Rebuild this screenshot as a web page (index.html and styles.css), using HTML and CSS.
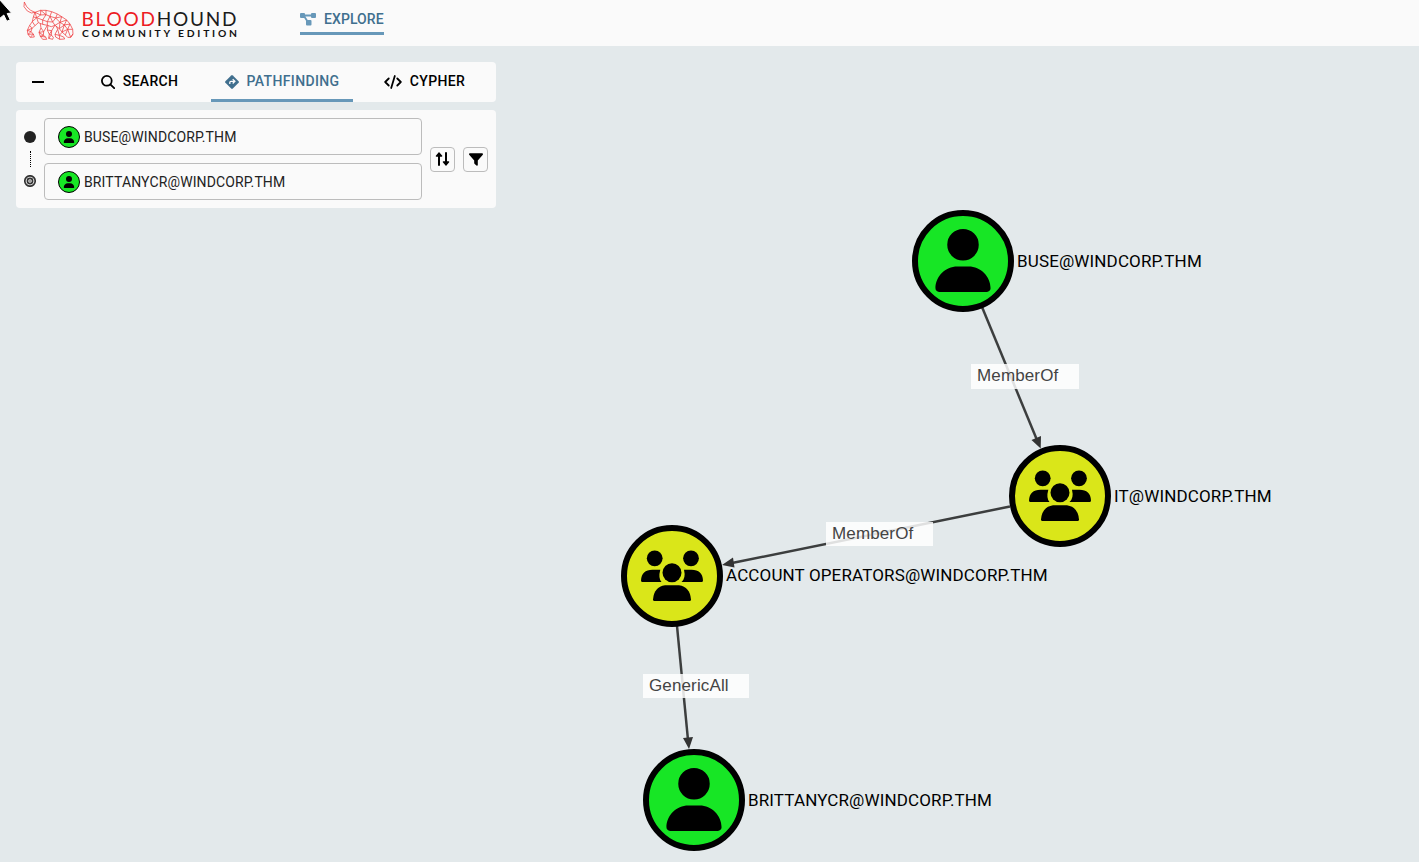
FILE: index.html
```html
<!DOCTYPE html>
<html lang="en">
<head>
<meta charset="utf-8">
<title>BloodHound</title>
<link rel="stylesheet" href="styles.css">
</head>
<body>
<svg class="defs" width="0" height="0">
  <defs>
    <symbol id="user" viewBox="0 0 448 512"><path d="M224 256A128 128 0 1 0 224 0a128 128 0 1 0 0 256zm-45.700 48C79.800 304 0 383.800 0 482.300C0 498.700 13.300 512 29.700 512H418.300c16.400 0 29.700-13.300 29.700-29.700C448 383.800 368.200 304 269.700 304H178.300z"/></symbol>
    <symbol id="group" viewBox="-31 -26 62 52">
      <circle cx="-17.300" cy="-17.700" r="7.900"/><circle cx="19" cy="-17.700" r="7.900"/>
      <path d="M-31 4.500Q-30.500-6.300-19.500-6.300H-11.700Q-14 2 -10.500 6H-29.500Q-31 6-31 4.500ZM31 4.500Q30.500-6.300 19.500-6.300H12Q14 2 9.500 6H29.500Q31 6 31 4.500Z"/>
      <circle cy="-3.300" r="9.500"/>
      <path d="M-7 9.300H7Q18 11 19 23.500Q19 25 17.500 25H-17.500Q-19 25-19 23.500Q-18 11-7 9.300Z"/>
    </symbol>
  </defs>
</svg>
<header class="topbar">
  <svg class="logo" width="220" height="46" viewBox="0 0 220 46">
    <g class="hound" transform="translate(-1 0) scale(.3333)">
      <path d="M13 6L12 20L22 33L34 39L45 37L62 31L78 31L95 35L112 42L125 50L140 60L150 72L158 88L159 102L152 112L143 112L136 105L126 96L118 86L105 76L94 80L82 76L68 73L55 68L45 77L36 85L33 95L40 102L43 111L31 112L24 103L22 91L29 76L37 65L40 51L45 37L32 31L20 20L13 6"/>
      <path d="M61 71L63 84L57 97L61 109L68 118L80 118L77 111L70 106L71 95L82 76M84 76L82 90L88 103L86 115L98 118L100 112L94 105L95 92L104 77M109 79L113 88L105 103L107 111L119 118L134 117L131 111L118 106L127 96"/>
      <path d="M45 37L50 53L40 51M50 53L37 65L45 77M50 53L55 68M50 53L62 45L45 37M62 45L62 31L78 44L78 31M62 45L78 44L68 60L50 53M68 60L68 73M78 44L90 49L82 65L68 60M82 65L82 76M95 35L90 49L107 54L112 42M107 54L98 66L82 65M90 49L98 66L105 76L120 67L107 54L125 50L120 67L118 86L133 75L120 67L140 60L133 75L150 72L143 88L133 75L126 96L143 88L158 88M143 88L136 105M143 88L152 112L159 102M29 76L36 85L22 91L33 95L24 103L40 102L31 112M63 84L71 95L57 97L70 106L61 109L77 111M82 90L95 92L88 103L94 105L86 115M113 88L118 106L105 103M118 106L119 118"/>
    </g>
    <text class="brand" x="60.500" y="25.500" textLength="155"><tspan class="red">BLOOD</tspan>HOUND</text>
    <text class="edition" x="61" y="37" textLength="155">COMMUNITY EDITION</text>
  </svg>
  <a class="explore">
    <svg width="16" height="13" viewBox="0 0 16 13"><path class="link" d="M3 2.500H13M4 3L8.500 10"/><rect width="5" height="5" rx="1"/><rect x="11" width="5" height="5" rx="1"/><rect x="6" y="7" width="5.500" height="5.500" rx="1"/></svg>
    <span>EXPLORE</span>
  </a>
</header>
<main>
  <section class="graph">
    <svg class="edges" width="1419" height="862" viewBox="0 0 1419 862">
      <g class="line"><path d="M982 307L1037 440"/><path d="M1010 506.500L732 563"/><path d="M677 626L688 740"/></g>
      <path class="tip" d="M1040.700 448.500L1031.500 440L1041 436ZM722 565L733 557.500L734.500 567.500ZM689 749L683 738L693 737Z"/>
    </svg>
    <div class="edge e1">MemberOf</div><div class="edge e2">MemberOf</div><div class="edge e3">GenericAll</div>
    <div class="node n1"><div class="disc"><svg class="person"><use href="#user"/></svg></div><span>BUSE@WINDCORP.THM</span></div>
    <div class="node n2"><div class="disc yellow"><svg class="people"><use href="#group"/></svg></div><span>IT@WINDCORP.THM</span></div>
    <div class="node n3"><div class="disc yellow"><svg class="people"><use href="#group"/></svg></div><span>ACCOUNT OPERATORS@WINDCORP.THM</span></div>
    <div class="node n4"><div class="disc"><svg class="person"><use href="#user"/></svg></div><span>BRITTANYCR@WINDCORP.THM</span></div>
  </section>
  <aside class="panel">
    <nav class="tabs">
      <button class="collapse"><i></i></button>
      <div class="tab"><svg width="14" height="14" viewBox="0 0 14 14"><circle class="stroke" cx="5.800" cy="5.800" r="4.900"/><path class="stroke" d="M9.300 9.300L13.200 13.200"/></svg><span>SEARCH</span></div>
      <div class="tab active"><svg width="14" height="14" viewBox="0 0 14 14"><path d="M6.200.4Q7-.3 7.800.4L13.600 6.200Q14.300 7 13.600 7.800L7.800 13.600Q7 14.300 6.200 13.600L.4 7.800Q-.3 7 .4 6.200Z"/><path class="turn" d="M4.800 9V7.500Q4.800 6.300 6 6.300H9.300M7.700 4.100L9.900 6.300L7.700 8.500"/></svg><span>PATHFINDING</span></div>
      <div class="tab"><svg width="18" height="14" viewBox="0 0 18 14"><path class="stroke" d="M4.700 3.500L1.200 7L4.700 10.500M13.300 3.500L16.800 7L13.300 10.500M10.800 1L7.200 13"/></svg><span>CYPHER</span></div>
    </nav>
    <div class="finder">
      <div class="markers"><svg width="12" height="12" viewBox="0 0 12 12"><circle class="dark" cx="6" cy="6" r="6"/></svg><i></i><svg width="12" height="12" viewBox="0 0 12 12"><g class="rings"><circle cx="6" cy="6" r="5.200"/><circle cx="6" cy="6" r="2.600"/></g><circle cx="6" cy="6" r=".9" fill="#777"/></svg></div>
      <div class="fields">
        <div class="field"><b><svg width="12" height="12"><use href="#user"/></svg></b><span>BUSE@WINDCORP.THM</span></div>
        <div class="field"><b><svg width="12" height="12"><use href="#user"/></svg></b><span>BRITTANYCR@WINDCORP.THM</span></div>
      </div>
      <button class="tool"><svg width="15" height="14" viewBox="0 0 15 14"><path class="arrow" d="M4 13V2M11 1V12"/><path d="M4 0L7.300 3.800Q7.500 4.800 6.500 4.800H1.500Q.5 4.800.8 3.800ZM11 14L14.200 10.200Q14.500 9.200 13.500 9.200H8.500Q7.500 9.200 7.800 10.200Z"/></svg></button>
      <button class="tool"><svg width="14" height="13" viewBox="0 0 14 13"><path d="M.8.3H13.200Q14.500.8 13.600 2L8.800 7.500V12Q8.500 13 7.500 12.400L5.700 11Q5.200 10.700 5.200 10V7.500L.4 2Q-.5.8.8.3Z"/></svg></button>
    </div>
  </aside>
</main>
<svg class="cursor" width="15" height="24" viewBox="0 0 15 24"><path d="M-1-1L11.500 13L7.200 13.500L10.200 19.800L6.800 21.300L3.800 15L-1 19Z"/></svg>
</body>
</html>
```
FILE: styles.css
```css
* { box-sizing: border-box; }
body { margin: 0; height: 862px; overflow: hidden; background: #e3e9eb; color: #000; font-family: Roboto, "Liberation Sans", sans-serif; }
.defs { position: absolute; }
svg { display: block; flex: none; }
.topbar { display: flex; height: 46px; padding-left: 21px; background: #fafafa; }
.logo { width: 220px; }
.hound { fill: none; stroke: #ee3a3c; stroke-width: 2.200; stroke-linejoin: round; }
.brand { font: 400 19px Lato, sans-serif; fill: #1c1c1c; }
.brand .red { fill: #ed1c24; }
.edition { font: 700 10.300px Lato, sans-serif; fill: #111; }
.explore { display: flex; align-items: center; gap: 8px; height: 30px; margin: 5px 0 0 59px; width: 84px; border-bottom: 3px solid #6798b9; color: #406f8e; font-size: 14px; font-weight: 500; letter-spacing: .08px; white-space: nowrap; }
.explore svg { position: relative; top: .5px; fill: #6798b9; }
.link { stroke: #6798b9; stroke-width: 1.800; fill: none; }
.panel { position: absolute; top: 62px; left: 16px; width: 480px; }
.tabs { display: flex; height: 40px; background: #fafafa; border-radius: 4px; overflow: hidden; }
.collapse { display: flex; align-items: center; justify-content: center; width: 44px; border: 0; padding: 0; background: none; }
.collapse i { width: 12px; height: 2px; background: #000; }
.tab { display: flex; flex: none; align-items: center; justify-content: center; gap: 8px; width: 142px; border-bottom: 3px solid transparent; font-size: 14px; font-weight: 500; letter-spacing: .36px; }
.tab:nth-child(2) { margin-left: 9px; padding-right: 1px; }
.tab svg { position: relative; top: 1px; }
.stroke { fill: none; stroke: #000; stroke-width: 1.800; stroke-linecap: round; stroke-linejoin: round; }
.active { color: #406f8e; fill: #406f8e; border-color: #6798b9; }
.tab:last-child { padding-left: 1px; }
.turn { fill: none; stroke: #fafafa; stroke-width: 1.300; }
.finder { display: flex; align-items: center; height: 98px; margin-top: 8px; padding: 8px; background: #fafafa; border-radius: 4px; }
.markers { display: flex; flex-direction: column; align-items: center; width: 12px; height: 56px; justify-content: space-between; }
.markers i { height: 16px; border-left: 1px dotted #000; margin-left: 1px; }
.dark { fill: #222; }
.rings { fill: none; stroke: #333; stroke-width: 1.700; }
.fields { display: grid; gap: 8px; width: 378px; margin-left: 8px; }
.field { display: flex; align-items: center; gap: 4px; height: 37px; padding-left: 13px; border: 1px solid #bcbcbc; border-radius: 4px; color: #222; font-size: 14px; letter-spacing: .131px; }
.field b { display: grid; place-items: center; width: 22px; height: 22px; border: 1px solid #000; border-radius: 50%; background: #17e625; }
.tool { display: grid; place-items: center; width: 25px; height: 25px; margin-left: 8px; padding: 0; border: 1px solid #bcbcbc; border-radius: 4px; background: none; }
.arrow { fill: none; stroke: #000; stroke-width: 2; stroke-linecap: round; }
.graph, .edges { position: absolute; top: 0; left: 0; }
.line { fill: none; stroke: #3c3e3e; stroke-width: 2.500; }
.tip { fill: #333; }
.edge { position: absolute; height: 24px; padding-left: 6px; background: rgba(255,255,255,.84); color: #444; font: 17px/24px "Liberation Sans", sans-serif; letter-spacing: .13px; }
.e1 { left: 971px; top: 364px; width: 108px; height: 25px; }
.e2 { left: 826px; top: 522px; width: 107px; }
.e3 { left: 643px; top: 674px; width: 106px; }
.node { position: absolute; display: flex; align-items: center; gap: 3px; font-size: 17px; letter-spacing: .14px; white-space: nowrap; }
.disc { display: grid; place-items: center; width: 102px; height: 102px; border: 6px solid #000; border-radius: 50%; background: #17e625; }
.yellow { background: #dae619; }
.person { width: 56px; height: 63px; margin-bottom: 1px; }
.people { width: 62px; height: 52px; }
.n1 { left: 912px; top: 210px; }
.n2 { left: 1009px; top: 445px; }
.n3 { left: 621px; top: 524.500px; }
.n3 span { margin-bottom: 1px; }
.n4 { left: 643px; top: 749px; }
.cursor { position: absolute; top: 0; left: 0; fill: #000; stroke: #fff; stroke-width: 1; }
```
